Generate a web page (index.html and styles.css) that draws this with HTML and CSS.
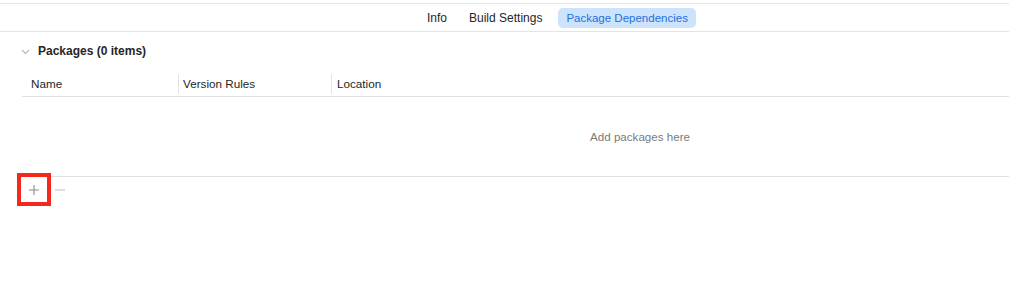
FILE: index.html
```html
<!DOCTYPE html>
<html>
<head>
<meta charset="utf-8">
<link rel="stylesheet" href="styles.css">
</head>
<body>
<div class="page">
  <div class="tabbar">
    <span class="tab">Info</span>
    <span class="tab">Build Settings</span>
    <span class="tab active">Package Dependencies</span>
  </div>
  <div class="section">
    <div class="section-head">
      <svg class="chev" width="9" height="6" viewBox="0 0 9 6"><path d="M1 1 L4.5 4.5 L8 1" fill="none" stroke="#b5b5b5" stroke-width="1.1"/></svg>
      <span class="title">Packages (0 items)</span>
    </div>
    <div class="table">
      <div class="thead">
        <div class="col c1">Name</div>
        <div class="col c2">Version Rules</div>
        <div class="col c3">Location</div>
      </div>
      <div class="empty">Add packages here</div>
    </div>
    <div class="footer">
      <div class="add-box">
        <svg width="12" height="12" viewBox="0 0 12 12"><path d="M6 1 V11 M1 6 H11" stroke="#8a8a8a" stroke-width="1.1"/></svg>
      </div>
      <svg class="minus" width="12" height="12" viewBox="0 0 12 12"><path d="M1 6 H11" stroke="#c4c4c4" stroke-width="1.1"/></svg>
    </div>
  </div>
</div>
</body>
</html>
```

FILE: styles.css
```css
html, body {
  margin: 0;
  padding: 0;
  background: #ffffff;
}
body {
  font-family: "Liberation Sans", Arial, sans-serif;
  font-size: 11px;
  color: #262626;
  width: 1009px;
  height: 294px;
  overflow: hidden;
}
.page {
  padding-top: 3px;
}
.tabbar {
  border-top: 1px solid #e4e4e4;
  border-bottom: 1px solid #e4e4e4;
  height: 29px;
  display: flex;
  align-items: center;
  padding-left: 419px;
  box-sizing: border-box;
}
.tab {
  font-size: 12px;
  color: #262626;
  padding: 3px 8px;
  border-radius: 5px;
  line-height: 14px;
}
.tab + .tab {
  margin-left: 6px;
}
.tab.active {
  margin-left: 8px;
  font-size: 11.5px;
  padding: 3px 8px 3px 8px;
  line-height: 14px;
  background: #cde3fb;
  color: #1f6fe0;
}
.section {
  padding-left: 21px;
}
.section-head {
  display: flex;
  align-items: center;
  height: 20px;
  margin-top: 9px;
}
.chev {
  margin-right: 8px;
  margin-top: 1px;
}
.title {
  font-weight: bold;
  font-size: 12px;
  color: #262626;
}
.table {
  margin-top: 10px;
  margin-left: 1px;
}
.thead {
  display: flex;
  height: 25px;
  border-bottom: 1px solid #e2e2e2;
  align-items: center;
}
.col {
  font-size: 11.7px;
  color: #262626;
  padding-left: 9px;
  height: 20px;
  line-height: 20px;
  box-sizing: border-box;
}
.c1 { width: 156px; }
.c2 {
  width: 153px;
  border-left: 1px solid #e2e2e2;
  padding-left: 4px;
}
.c3 {
  border-left: 1px solid #e2e2e2;
  padding-left: 5px;
}
.empty {
  height: 80px;
  display: flex;
  align-items: center;
  justify-content: center;
  padding-left: 249px;
  font-size: 11.6px;
  color: #7b7b7b;
  border-bottom: 1px solid #e2e2e2;
  box-sizing: border-box;
}
.footer {
  display: flex;
  align-items: center;
  margin-top: -4px;
  margin-left: -4px;
}
.add-box {
  width: 26px;
  height: 25px;
  border: 4px solid #f5281c;
  background: #ffffff;
  display: flex;
  align-items: center;
  justify-content: center;
}
.minus {
  margin-left: 3px;
}
```
